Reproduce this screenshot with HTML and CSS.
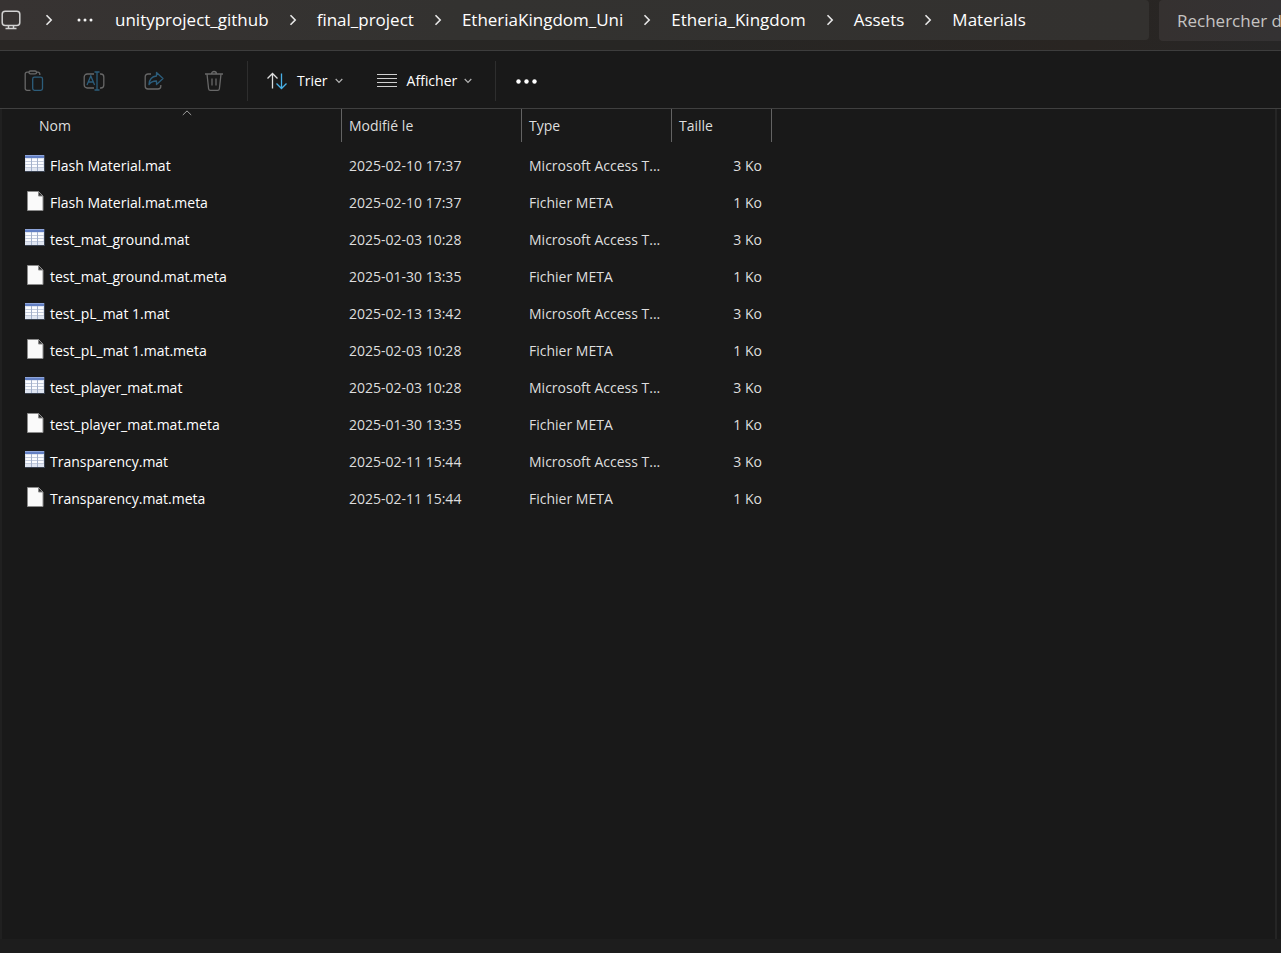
FILE: index.html
```html
<!DOCTYPE html>
<html lang="fr">
<head>
<meta charset="utf-8">
<meta name="viewport" content="width=device-width, initial-scale=1">
<title>Materials</title>
<link rel="stylesheet" href="styles.css">
</head>
<body>
<svg class="defs" aria-hidden="true">
  <symbol id="chevron" viewBox="0 0 8 12"><path d="M1.5 1.2 6.2 6 1.5 10.8" fill="none" stroke="#e8e8e8" stroke-width="1.6"/></symbol>
  <symbol id="down" viewBox="0 0 8 6"><path d="M.7 1 4 4.3 7.3 1" fill="none" stroke="#b4b4b4" stroke-width="1.2"/></symbol>
  <symbol id="sheet" viewBox="0 0 20 17">
    <path d="M0 0h20v17H0z" fill="#3a4250"/>
    <path d="M0 0h19v16H0z" fill="#dfe5f1"/>
    <path d="M0 0h19v3H0z" fill="#6380c4"/>
    <path d="M0 0h19v1H0z" fill="#8ea5da"/>
    <path d="M1 4h5v2H1zM7 4h5v2H7zM13 4h5v2h-5zM1 7h5v2H1zM7 7h5v2H7zM13 7h5v2h-5zM1 10h5v2H1zM7 10h5v2H7zM13 10h5v2h-5z" fill="#fbfcff"/>
    <path d="M0 6.5h19M0 9.5h19M0 12.5h19" stroke="#c3cbdc"/>
    <path d="M6.5 3v13M12.5 3v13" stroke="#a3b1cc"/>
  </symbol>
  <symbol id="page" viewBox="0 0 17 20">
    <path d="M.5.5h11l4.500 4.500v14.500H.5z" fill="#fafafa" stroke="#8b8b8b"/>
    <path d="M11.500.5v4.500h4.500z" fill="#333" stroke="#8b8b8b"/>
  </symbol>
</svg>
<div class="window">
  <header class="header">
    <nav class="address" aria-label="Chemin">
      <button class="pc" aria-label="Ordinateur"><svg width="20" height="20" viewBox="0 0 20 20" fill="none" stroke="#d2d2d2" stroke-width="1.500"><rect x="1.200" y="1.200" width="17.600" height="14.300" rx="3"/><path d="M7.500 15.500v3M12.500 15.500v3M4.500 18.500h11"/></svg></button>
      <svg class="sep sep-first"><use href="#chevron"/></svg>
      <button class="more" aria-label="Plus d’emplacements"><svg width="16" height="4" viewBox="0 0 16 4" fill="#f4f4f4"><circle cx="2" cy="2" r="1.500"/><circle cx="8" cy="2" r="1.500"/><circle cx="14" cy="2" r="1.500"/></svg></button>
      <a href="#">unityproject_github</a>
      <svg class="sep"><use href="#chevron"/></svg>
      <a href="#">final_project</a>
      <svg class="sep"><use href="#chevron"/></svg>
      <a href="#">EtheriaKingdom_Uni</a>
      <svg class="sep"><use href="#chevron"/></svg>
      <a href="#">Etheria_Kingdom</a>
      <svg class="sep"><use href="#chevron"/></svg>
      <a href="#">Assets</a>
      <svg class="sep"><use href="#chevron"/></svg>
      <a href="#">Materials</a>
    </nav>
    <input class="search" type="text" aria-label="Rechercher" placeholder="Rechercher dans">
  </header>
  <div class="toolbar" role="toolbar" aria-label="Commandes">
    <div class="group icons">
      <button disabled aria-label="Coller"><svg width="20" height="22" viewBox="0 0 20 22" fill="none" stroke-width="1.300"><path d="M6.500 20.300H3A1.800 1.800 0 0 1 1.200 18.500V4A1.800 1.800 0 0 1 3 2.200h2M12.500 2.200H14A1.800 1.800 0 0 1 15.800 4v1" stroke="#686868"/><rect x="5" y="1" width="7.500" height="2.800" rx="1.400" stroke="#686868"/><rect x="8.700" y="7.200" width="9.800" height="13.100" rx="1.800" stroke="#2c5d7b"/></svg></button>
      <button disabled aria-label="Renommer"><svg width="22" height="20" viewBox="0 0 22 20" fill="none" stroke-width="1.300"><path d="M11 17H4.200A3 3 0 0 1 1.200 14V6A3 3 0 0 1 4.200 3H11M17 3h.8a3 3 0 0 1 3 3v8a3 3 0 0 1-3 3H17" stroke="#686868"/><path d="m4 14 3.800-9 3.800 9M5.300 11h5M14 1v18M11.500 1h5M11.500 19h5" stroke="#2c5d7b"/></svg></button>
      <button disabled aria-label="Partager"><svg width="20" height="20" viewBox="0 0 20 20" fill="none" stroke-width="1.300"><path d="M7 3H4a2.800 2.800 0 0 0-2.800 2.800v9.400A2.800 2.800 0 0 0 4 18h10a2.800 2.800 0 0 0 2.800-2.800V14" stroke="#686868"/><path d="M12.500 1.500 19 7.500l-6.500 6V10C9 9.800 7 11 5 13.500c.3-5 2.500-8 7.500-8.500z" stroke="#2c5d7b" stroke-linejoin="round"/></svg></button>
      <button disabled aria-label="Supprimer"><svg width="20" height="22" viewBox="0 0 20 22" fill="none" stroke="#686868" stroke-width="1.300"><path d="M1 4h18M7.500 4a2.500 2.500 0 0 1 5 0M3 4l1.600 14.700a1.800 1.800 0 0 0 1.800 1.600h7.200a1.800 1.800 0 0 0 1.800-1.600L17 4M8 8.500v7M12 8.500v7"/></svg></button>
    </div>
    <div class="group">
      <button class="menu"><svg width="20" height="18" viewBox="0 0 20 18" fill="none" stroke-width="1.300"><path d="M5.500 16.500V1.500M.5 6.500l5-5 5 5" stroke="#dedede"/><path d="M14.500 1.500v15M9.500 11.500l5 5 5-5" stroke="#48b1e8"/></svg>Trier<svg class="down"><use href="#down"/></svg></button>
      <button class="menu"><svg width="20" height="14" viewBox="0 0 20 14" stroke="#d0d0d0"><path d="M0 .5h20M0 4.500h20M0 8.500h20M0 12.500h20"/></svg>Afficher<svg class="down"><use href="#down"/></svg></button>
    </div>
    <button class="options" aria-label="Plus d’options"><svg width="21" height="5" viewBox="0 0 21 5" fill="#fff"><circle cx="2.500" cy="2.500" r="2.200"/><circle cx="10.500" cy="2.500" r="2.200"/><circle cx="18.500" cy="2.500" r="2.200"/></svg></button>
  </div>
  <main class="content">
    <div class="pane">
    <table class="files">
      <colgroup><col class="c-name"><col class="c-date"><col class="c-type"><col class="c-size"></colgroup>
      <thead><tr>
        <th aria-sort="ascending">Nom<svg class="sorted" viewBox="0 0 10 6"><path d="M.8 5 5 .9 9.200 5" fill="none" stroke="#a0a0a0"/></svg></th>
        <th>Modifié le</th><th>Type</th><th>Taille</th>
      </tr></thead>
      <tbody>
        <tr><td><span class="name"><svg class="sheet"><use href="#sheet"/></svg>Flash Material.mat</span></td><td>2025-02-10 17:37</td><td>Microsoft Access T...</td><td>3 Ko</td></tr>
        <tr><td><span class="name"><svg class="page"><use href="#page"/></svg>Flash Material.mat.meta</span></td><td>2025-02-10 17:37</td><td>Fichier META</td><td>1 Ko</td></tr>
        <tr><td><span class="name"><svg class="sheet"><use href="#sheet"/></svg>test_mat_ground.mat</span></td><td>2025-02-03 10:28</td><td>Microsoft Access T...</td><td>3 Ko</td></tr>
        <tr><td><span class="name"><svg class="page"><use href="#page"/></svg>test_mat_ground.mat.meta</span></td><td>2025-01-30 13:35</td><td>Fichier META</td><td>1 Ko</td></tr>
        <tr><td><span class="name"><svg class="sheet"><use href="#sheet"/></svg>test_pL_mat 1.mat</span></td><td>2025-02-13 13:42</td><td>Microsoft Access T...</td><td>3 Ko</td></tr>
        <tr><td><span class="name"><svg class="page"><use href="#page"/></svg>test_pL_mat 1.mat.meta</span></td><td>2025-02-03 10:28</td><td>Fichier META</td><td>1 Ko</td></tr>
        <tr><td><span class="name"><svg class="sheet"><use href="#sheet"/></svg>test_player_mat.mat</span></td><td>2025-02-03 10:28</td><td>Microsoft Access T...</td><td>3 Ko</td></tr>
        <tr><td><span class="name"><svg class="page"><use href="#page"/></svg>test_player_mat.mat.meta</span></td><td>2025-01-30 13:35</td><td>Fichier META</td><td>1 Ko</td></tr>
        <tr><td><span class="name"><svg class="sheet"><use href="#sheet"/></svg>Transparency.mat</span></td><td>2025-02-11 15:44</td><td>Microsoft Access T...</td><td>3 Ko</td></tr>
        <tr><td><span class="name"><svg class="page"><use href="#page"/></svg>Transparency.mat.meta</span></td><td>2025-02-11 15:44</td><td>Fichier META</td><td>1 Ko</td></tr>
      </tbody>
    </table>
    </div>
  </main>
  <footer class="status"></footer>
</div>
</body>
</html>
```
FILE: styles.css
```css
* { box-sizing: border-box; }
body {
  margin: 0;
  background: #191919;
  color: #fff;
  font-family: "Segoe UI", "Open Sans", "Noto Sans", sans-serif;
  font-size: 14px;
  line-height: 20px;
}
button {
  display: flex;
  align-items: center;
  padding: 0;
  border: 0;
  background: none;
  color: inherit;
  font: inherit;
}
svg { display: block; flex: none; }
.defs { position: absolute; width: 0; height: 0; }
.window {
  display: flex;
  flex-direction: column;
  min-height: 100vh;
  overflow: hidden;
}

.header {
  display: flex;
  align-items: flex-start;
  gap: 10px;
  height: 51px;
  background: linear-gradient(90deg, #292624, #272624 50%, #292522 85%, #272626);
  border-bottom: 1px solid #3d3d3d;
}
.address {
  display: flex;
  flex: 1;
  align-items: center;
  min-width: 0;
  height: 40px;
  padding-left: 1px;
  background: linear-gradient(90deg, #373332, #333230 40%, #33312f);
  border-radius: 0 4px 4px 0;
  font-size: 17px;
  white-space: nowrap;
}
.address a { color: #fff; text-decoration: none; }
.sep { width: 8px; height: 12px; margin: 0 20px; }
.sep-first { margin: 0 24px; }
.more { margin-right: 22px; }
.search {
  width: 122px;
  height: 41px;
  padding: 0 0 0 18px;
  border: 0;
  border-radius: 4px 0 0 4px;
  background: linear-gradient(90deg, #353130, #343233);
  color: #fff;
  font: inherit;
  font-size: 17px;
}
.search::placeholder { color: #c6c4c2; opacity: 1; }

.toolbar {
  display: flex;
  align-items: center;
  height: 58px;
  padding-top: 3px;
  border-bottom: 1px solid #404040;
}
.group {
  display: flex;
  align-items: center;
  gap: 34px;
  height: 40px;
  padding: 0 23px 0 19px;
  border-right: 1px solid #2e2e2e;
}
.icons { gap: 0; padding: 0 3px 0 4px; }
.icons button { justify-content: center; width: 60px; height: 40px; }
.menu { gap: 10px; height: 40px; }
.down { width: 8px; height: 6px; margin-left: -3px; }
.options { height: 40px; padding: 0 20px; }

.content {
  display: flex;
  flex: 1;
  padding-right: 4px;
  border-left: 2px solid #202020;
}
.pane { flex: 1; border-right: 2px solid #252525; }
.files {
  width: 770px;
  border-collapse: separate;
  border-spacing: 0;
  table-layout: fixed;
}
.c-name { width: 340px; }
.c-date { width: 180px; }
.c-type { width: 150px; }
.c-size { width: 100px; }
th {
  position: relative;
  height: 33px;
  padding: 0 7px;
  border-right: 1px solid #636363;
  color: #dedede;
  font-weight: 400;
  text-align: left;
}
th:first-child { padding-left: 37px; }
.sorted { position: absolute; top: 1px; left: calc(50% + 10px); width: 10px; height: 6px; }
tbody::before { content: ""; display: block; height: 5px; }
td {
  height: 37px;
  padding: 0 7px;
  color: #dedede;
  white-space: nowrap;
}
td:first-child { padding-left: 23px; color: #fff; }
td:last-child { padding-right: 10px; text-align: right; }
.name { display: flex; align-items: center; gap: 5px; }
.sheet { width: 20px; height: 17px; margin-bottom: 4px; }
.page { width: 17px; height: 20px; margin: 0 1px 3px 2px; }
.status { height: 14px; background: #1d1d1d; }
```
